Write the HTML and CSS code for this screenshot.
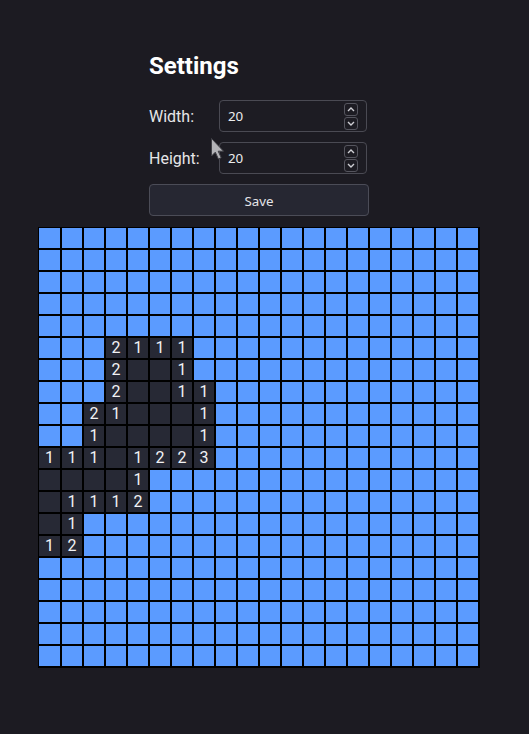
FILE: index.html
```html
<!DOCTYPE html>
<html>
<head>
<meta charset="utf-8">
<link rel="stylesheet" href="styles.css">
</head>
<body>
<div class="page">
  <div class="settings">
    <h1 class="title">Settings</h1>
    <div class="row">
      <span class="label">Width:</span>
      <div class="field"><span class="value">20</span>
        <div class="spin">
          <span class="spin-btn"><svg width="8" height="5" viewBox="0 0 8 5"><path d="M1 4 L4 1 L7 4" fill="none" stroke="#cfcfd4" stroke-width="1.4"/></svg></span>
          <span class="spin-btn"><svg width="8" height="5" viewBox="0 0 8 5"><path d="M1 1 L4 4 L7 1" fill="none" stroke="#cfcfd4" stroke-width="1.4"/></svg></span>
        </div>
      </div>
    </div>
    <div class="row">
      <span class="label">Height:</span>
      <div class="field"><span class="value">20</span>
        <div class="spin">
          <span class="spin-btn"><svg width="8" height="5" viewBox="0 0 8 5"><path d="M1 4 L4 1 L7 4" fill="none" stroke="#cfcfd4" stroke-width="1.4"/></svg></span>
          <span class="spin-btn"><svg width="8" height="5" viewBox="0 0 8 5"><path d="M1 1 L4 4 L7 1" fill="none" stroke="#cfcfd4" stroke-width="1.4"/></svg></span>
        </div>
      </div>
    </div>
    <button class="save">Save</button>
  </div>
  <div class="board">
<div class="c"></div><div class="c"></div><div class="c"></div><div class="c"></div><div class="c"></div><div class="c"></div><div class="c"></div><div class="c"></div><div class="c"></div><div class="c"></div><div class="c"></div><div class="c"></div><div class="c"></div><div class="c"></div><div class="c"></div><div class="c"></div><div class="c"></div><div class="c"></div><div class="c"></div><div class="c"></div>
<div class="c"></div><div class="c"></div><div class="c"></div><div class="c"></div><div class="c"></div><div class="c"></div><div class="c"></div><div class="c"></div><div class="c"></div><div class="c"></div><div class="c"></div><div class="c"></div><div class="c"></div><div class="c"></div><div class="c"></div><div class="c"></div><div class="c"></div><div class="c"></div><div class="c"></div><div class="c"></div>
<div class="c"></div><div class="c"></div><div class="c"></div><div class="c"></div><div class="c"></div><div class="c"></div><div class="c"></div><div class="c"></div><div class="c"></div><div class="c"></div><div class="c"></div><div class="c"></div><div class="c"></div><div class="c"></div><div class="c"></div><div class="c"></div><div class="c"></div><div class="c"></div><div class="c"></div><div class="c"></div>
<div class="c"></div><div class="c"></div><div class="c"></div><div class="c"></div><div class="c"></div><div class="c"></div><div class="c"></div><div class="c"></div><div class="c"></div><div class="c"></div><div class="c"></div><div class="c"></div><div class="c"></div><div class="c"></div><div class="c"></div><div class="c"></div><div class="c"></div><div class="c"></div><div class="c"></div><div class="c"></div>
<div class="c"></div><div class="c"></div><div class="c"></div><div class="c"></div><div class="c"></div><div class="c"></div><div class="c"></div><div class="c"></div><div class="c"></div><div class="c"></div><div class="c"></div><div class="c"></div><div class="c"></div><div class="c"></div><div class="c"></div><div class="c"></div><div class="c"></div><div class="c"></div><div class="c"></div><div class="c"></div>
<div class="c"></div><div class="c"></div><div class="c"></div><div class="c o">2</div><div class="c o">1</div><div class="c o">1</div><div class="c o">1</div><div class="c"></div><div class="c"></div><div class="c"></div><div class="c"></div><div class="c"></div><div class="c"></div><div class="c"></div><div class="c"></div><div class="c"></div><div class="c"></div><div class="c"></div><div class="c"></div><div class="c"></div>
<div class="c"></div><div class="c"></div><div class="c"></div><div class="c o">2</div><div class="c o"></div><div class="c o"></div><div class="c o">1</div><div class="c"></div><div class="c"></div><div class="c"></div><div class="c"></div><div class="c"></div><div class="c"></div><div class="c"></div><div class="c"></div><div class="c"></div><div class="c"></div><div class="c"></div><div class="c"></div><div class="c"></div>
<div class="c"></div><div class="c"></div><div class="c"></div><div class="c o">2</div><div class="c o"></div><div class="c o"></div><div class="c o">1</div><div class="c o">1</div><div class="c"></div><div class="c"></div><div class="c"></div><div class="c"></div><div class="c"></div><div class="c"></div><div class="c"></div><div class="c"></div><div class="c"></div><div class="c"></div><div class="c"></div><div class="c"></div>
<div class="c"></div><div class="c"></div><div class="c o">2</div><div class="c o">1</div><div class="c o"></div><div class="c o"></div><div class="c o"></div><div class="c o">1</div><div class="c"></div><div class="c"></div><div class="c"></div><div class="c"></div><div class="c"></div><div class="c"></div><div class="c"></div><div class="c"></div><div class="c"></div><div class="c"></div><div class="c"></div><div class="c"></div>
<div class="c"></div><div class="c"></div><div class="c o">1</div><div class="c o"></div><div class="c o"></div><div class="c o"></div><div class="c o"></div><div class="c o">1</div><div class="c"></div><div class="c"></div><div class="c"></div><div class="c"></div><div class="c"></div><div class="c"></div><div class="c"></div><div class="c"></div><div class="c"></div><div class="c"></div><div class="c"></div><div class="c"></div>
<div class="c o">1</div><div class="c o">1</div><div class="c o">1</div><div class="c o"></div><div class="c o">1</div><div class="c o">2</div><div class="c o">2</div><div class="c o">3</div><div class="c"></div><div class="c"></div><div class="c"></div><div class="c"></div><div class="c"></div><div class="c"></div><div class="c"></div><div class="c"></div><div class="c"></div><div class="c"></div><div class="c"></div><div class="c"></div>
<div class="c o"></div><div class="c o"></div><div class="c o"></div><div class="c o"></div><div class="c o">1</div><div class="c"></div><div class="c"></div><div class="c"></div><div class="c"></div><div class="c"></div><div class="c"></div><div class="c"></div><div class="c"></div><div class="c"></div><div class="c"></div><div class="c"></div><div class="c"></div><div class="c"></div><div class="c"></div><div class="c"></div>
<div class="c o"></div><div class="c o">1</div><div class="c o">1</div><div class="c o">1</div><div class="c o">2</div><div class="c"></div><div class="c"></div><div class="c"></div><div class="c"></div><div class="c"></div><div class="c"></div><div class="c"></div><div class="c"></div><div class="c"></div><div class="c"></div><div class="c"></div><div class="c"></div><div class="c"></div><div class="c"></div><div class="c"></div>
<div class="c o"></div><div class="c o">1</div><div class="c"></div><div class="c"></div><div class="c"></div><div class="c"></div><div class="c"></div><div class="c"></div><div class="c"></div><div class="c"></div><div class="c"></div><div class="c"></div><div class="c"></div><div class="c"></div><div class="c"></div><div class="c"></div><div class="c"></div><div class="c"></div><div class="c"></div><div class="c"></div>
<div class="c o">1</div><div class="c o">2</div><div class="c"></div><div class="c"></div><div class="c"></div><div class="c"></div><div class="c"></div><div class="c"></div><div class="c"></div><div class="c"></div><div class="c"></div><div class="c"></div><div class="c"></div><div class="c"></div><div class="c"></div><div class="c"></div><div class="c"></div><div class="c"></div><div class="c"></div><div class="c"></div>
<div class="c"></div><div class="c"></div><div class="c"></div><div class="c"></div><div class="c"></div><div class="c"></div><div class="c"></div><div class="c"></div><div class="c"></div><div class="c"></div><div class="c"></div><div class="c"></div><div class="c"></div><div class="c"></div><div class="c"></div><div class="c"></div><div class="c"></div><div class="c"></div><div class="c"></div><div class="c"></div>
<div class="c"></div><div class="c"></div><div class="c"></div><div class="c"></div><div class="c"></div><div class="c"></div><div class="c"></div><div class="c"></div><div class="c"></div><div class="c"></div><div class="c"></div><div class="c"></div><div class="c"></div><div class="c"></div><div class="c"></div><div class="c"></div><div class="c"></div><div class="c"></div><div class="c"></div><div class="c"></div>
<div class="c"></div><div class="c"></div><div class="c"></div><div class="c"></div><div class="c"></div><div class="c"></div><div class="c"></div><div class="c"></div><div class="c"></div><div class="c"></div><div class="c"></div><div class="c"></div><div class="c"></div><div class="c"></div><div class="c"></div><div class="c"></div><div class="c"></div><div class="c"></div><div class="c"></div><div class="c"></div>
<div class="c"></div><div class="c"></div><div class="c"></div><div class="c"></div><div class="c"></div><div class="c"></div><div class="c"></div><div class="c"></div><div class="c"></div><div class="c"></div><div class="c"></div><div class="c"></div><div class="c"></div><div class="c"></div><div class="c"></div><div class="c"></div><div class="c"></div><div class="c"></div><div class="c"></div><div class="c"></div>
<div class="c"></div><div class="c"></div><div class="c"></div><div class="c"></div><div class="c"></div><div class="c"></div><div class="c"></div><div class="c"></div><div class="c"></div><div class="c"></div><div class="c"></div><div class="c"></div><div class="c"></div><div class="c"></div><div class="c"></div><div class="c"></div><div class="c"></div><div class="c"></div><div class="c"></div><div class="c"></div>
  </div>
</div>
<svg class="cursor" width="16" height="24" viewBox="0 0 16 24"><path d="M1.5 1.5 L1.5 19 L5.3 15.2 L8.4 22 L11.2 20.7 L8.2 14.2 L13.5 14.2 Z" fill="#b4b4b8" stroke="#404046" stroke-width="1"/></svg>
</body>
</html>
```
FILE: styles.css
```css
html, body {
  margin: 0;
  padding: 0;
}
body {
  background: #1c1b22;
  font-family: Roboto, "Noto Sans", sans-serif;
  color: #e8e8ea;
  width: 529px;
  height: 734px;
  overflow: hidden;
  position: relative;
}
.page {
  padding: 52px 0 0 38px;
  display: flex;
  flex-direction: column;
  align-items: flex-start;
}
.settings {
  width: 220px;
  margin-left: 111px;
  display: flex;
  flex-direction: column;
  gap: 10px;
}
.title {
  margin: 0 0 10px 0;
  font-size: 24px;
  line-height: 28px;
  font-weight: 700;
  color: #ffffff;
}
.row {
  display: flex;
  align-items: center;
  height: 32px;
}
.label {
  width: 70px;
  font-size: 16px;
  color: #e6e6e8;
}
.field {
  box-sizing: border-box;
  width: 148px;
  height: 32px;
  border: 1px solid #4a4a53;
  border-radius: 4px;
  background: #1d1c23;
  display: flex;
  align-items: center;
  justify-content: space-between;
  padding: 0 8px 0 8px;
}
.value {
  font-family: "Noto Sans", sans-serif;
  font-size: 13.33px;
  color: #ececee;
}
.spin {
  display: flex;
  flex-direction: column;
  gap: 1px;
}
.spin-btn {
  box-sizing: border-box;
  width: 14px;
  height: 13px;
  border: 1px solid #55555e;
  border-radius: 3px;
  display: flex;
  align-items: center;
  justify-content: center;
}
.save {
  box-sizing: border-box;
  width: 220px;
  height: 32px;
  background: #262732;
  border: 1px solid #4b4c57;
  border-radius: 4px;
  color: #e4e4e8;
  font-family: "Noto Sans", sans-serif;
  font-size: 13.33px;
  padding: 2px 0 0 0;
}
.board {
  margin-top: 11px;
  display: grid;
  grid-template-columns: 21px repeat(19, 20px);
  grid-auto-rows: 20px;
  gap: 2px;
  padding: 1px 2px 2px 1px;
  background: #000;
}
.c {
  background: #5b9bff;
}
.c.o {
  background: #272935;
  color: #f2f2f4;
  font-family: Roboto, sans-serif;
  font-size: 16px;
  line-height: 20px;
  text-align: center;
}
.cursor {
  position: absolute;
  left: 210px;
  top: 137px;
}
```
